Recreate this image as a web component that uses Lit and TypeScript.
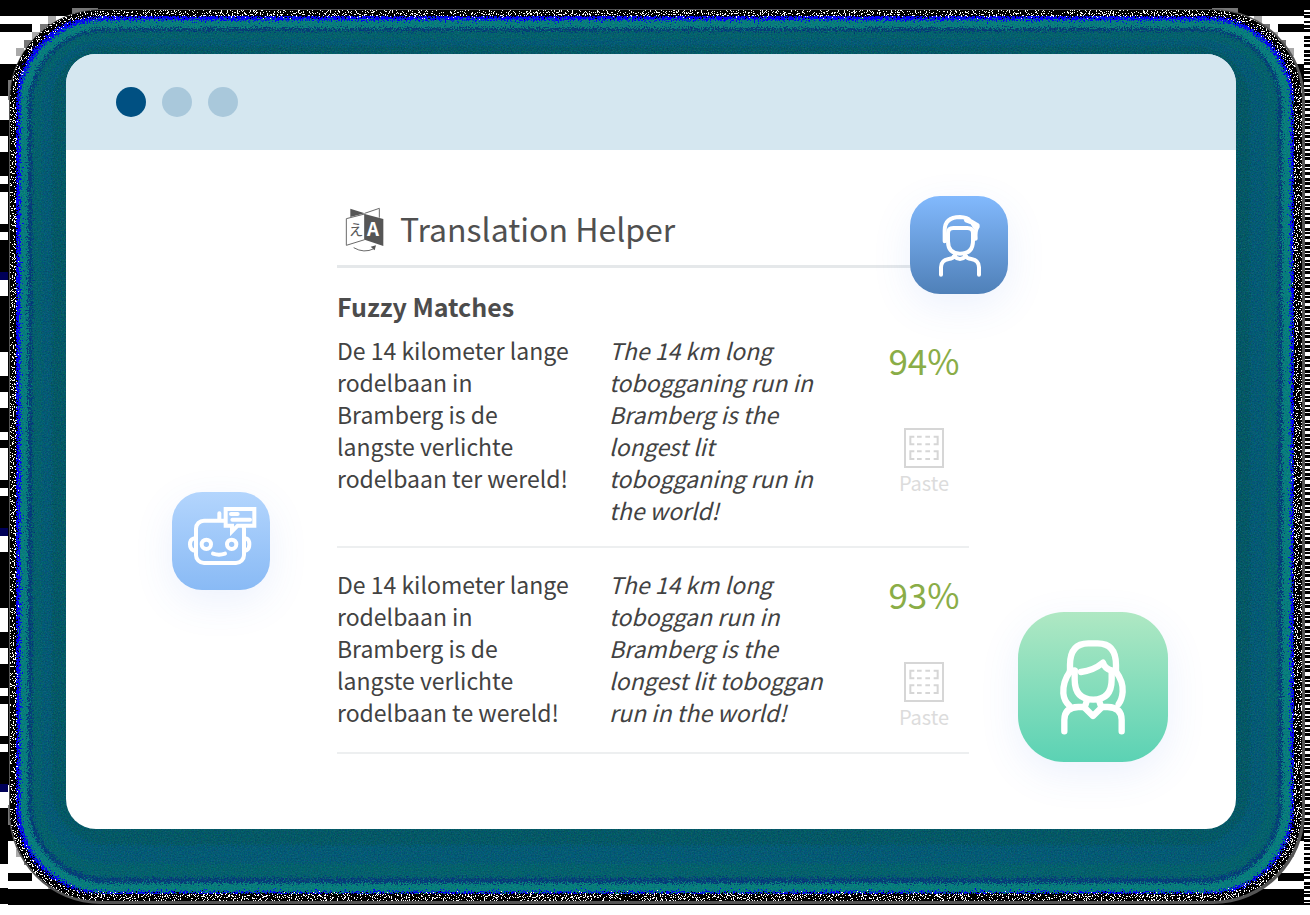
import { LitElement, html, css, svg } from "lit";
import { customElement, property } from "lit/decorators.js";

interface Match {
  source: string;
  target: string;
  score: number;
}

const MATCHES: Match[] = [
  {
    source: "De 14 kilometer lange rodelbaan in Bramberg is de langste verlichte rodelbaan ter wereld!",
    target: "The 14 km long tobogganing run in Bramberg is the longest lit tobogganing run in the world!",
    score: 94,
  },
  {
    source: "De 14 kilometer lange rodelbaan in Bramberg is de langste verlichte rodelbaan te wereld!",
    target: "The 14 km long toboggan run in Bramberg is the longest lit toboggan run in the world!",
    score: 93,
  },
];

// [start, end] of the dark bars in one 256px period of the left edge
const BARS = [[0, 16], [32, 56], [64, 72], [104, 112], [120, 152], [176, 232]];

// Steps of the blocky corner, as [inset along the edge, distance from the edge]
const STEPS = [[8, 80], [16, 48], [24, 40], [32, 32], [40, 24], [48, 16], [72, 8]];

@customElement("noise-frame")
class NoiseFrame extends LitElement {
  static styles = css`
    :host { display: block; position: absolute; inset: 0; overflow: hidden; background: #000; }
    svg { display: block; width: 100%; height: 100%; }
    .edge { x: 9px; y: 9px; width: calc(100% - 14px); height: calc(100% - 10px); rx: 92px; fill: #555; }
    .static { x: 10px; y: 10px; width: calc(100% - 18px); height: calc(100% - 14px); rx: 90px; fill: #000; }
    .blue { x: 16px; y: 16px; width: calc(100% - 32px); height: calc(100% - 27px); rx: 86px; fill: #0404f4; }
    .teal { x: 20px; y: 20px; width: calc(100% - 39px); height: calc(100% - 33px); rx: 84px; fill: #087c7c; }
    .navy { x: 28px; y: 28px; width: calc(100% - 56px); height: calc(100% - 50px); rx: 78px; fill: #053f78; }
    .green { x: 32px; y: 31px; width: calc(100% - 64px); height: calc(100% - 58px); rx: 74px; fill: #04606c; }
    .sea { x: 42px; y: 39px; width: calc(100% - 86px); height: calc(100% - 80px); rx: 66px; fill: #045a74; }
    .deep { x: 52px; y: 46px; width: calc(100% - 112px); height: calc(100% - 106px); rx: 56px; fill: #045866; }
  `;

  private corner(right: boolean, bottom: boolean) {
    return svg`<svg x=${right ? "100%" : "0"} y=${bottom ? "100%" : "0"} overflow="visible">
      <g transform="scale(${right ? -1 : 1} ${bottom ? -1 : 1})">
        <path fill="#fff" d="M0 16H72V24H48V32H40V40H32V64H0Z M0 88H16V120H0Z"/>
        <path fill="#000" d="M0 24H32V32H0Z"/>
        ${STEPS.map(([x, y]) => svg`<rect x=${x} y=${y} width=${x === 72 ? 26 : 8} height=${x === 8 ? 20 : 8} fill=${x % 16 ? "#777" : "#aaa"} />`)}
      </g>
    </svg>`;
  }

  render() {
    return html`<svg aria-hidden="true">
      <defs>
        <filter id="static" x="0" y="0" width="100%" height="100%" color-interpolation-filters="sRGB">
          <feTurbulence type="fractalNoise" baseFrequency="0.83" numOctaves="3" seed="4" />
          <feColorMatrix values="1 0 0 0 0  1 0 0 0 0  1 0 0 0 0  0 0 0 0 1" />
          <feComponentTransfer>
            <feFuncR type="discrete" tableValues="0 0 0 0 0 0 0 0 0 0 0 0 1 1 1 1 1 1 1 1" />
            <feFuncG type="discrete" tableValues="0 0 0 0 0 0 0 0 0 0 0 0 1 1 1 1 1 1 1 1" />
            <feFuncB type="discrete" tableValues="0 0 0 0 0 0 0 0 0 0 0 0 1 1 1 1 1 1 1 1" />
          </feComponentTransfer>
          <feComposite in2="SourceGraphic" operator="in" />
        </filter>
        <filter id="scatter" x="0" y="0" width="100%" height="100%" color-interpolation-filters="sRGB">
          <feTurbulence type="fractalNoise" baseFrequency="0.77" numOctaves="3" seed="11" result="n" />
          <feDisplacementMap in="SourceGraphic" in2="n" scale="12" xChannelSelector="R" yChannelSelector="G" result="d" />
          <feTurbulence type="fractalNoise" baseFrequency="0.7" numOctaves="2" seed="2" />
          <feColorMatrix values="1 0 0 0 0  0 1 0 0 0  0 0 1 0 0  0 0 0 0 1" result="g" />
          <feComposite in="d" in2="g" operator="arithmetic" k1="0" k2="1" k3="0.2" k4="-0.1" />
          <feComposite in2="d" operator="in" />
        </filter>
        <pattern id="bars" y="120" width="8" height="256" patternUnits="userSpaceOnUse">
          <rect width="8" height="256" fill="#fff" />
          ${BARS.map(([a, b]) => svg`<rect y=${a} width="8" height=${b - a} fill="#000" />`)}
          <rect y="152" width="8" height="8" fill="#000058" />
        </pattern>
        <pattern id="lines" width="6" height="64" patternUnits="userSpaceOnUse">
          <rect width="6" height="64" fill="#000" />
          <path fill="#fff" d="M0 2h6v2H0z M0 6h6v1H0z M0 10h6v3H0z M0 15h6v2H0z M0 20h6v1H0z M0 24h6v4H0z M0 31h6v1H0z M0 34h6v2H0z M0 39h6v3H0z M0 45h6v1H0z M0 49h6v2H0z M0 53h6v1H0z M0 57h6v3H0z M0 62h6v1H0z" />
        </pattern>
      </defs>
      ${this.corner(false, false)} ${this.corner(true, false)} ${this.corner(false, true)} ${this.corner(true, true)}
      <rect y="88" width="8" height="100%" fill="url(#bars)" />
      <svg x="100%" y="8" overflow="visible"><rect x="-6" width="6" height="100%" fill="url(#lines)" /></svg>
      <rect class="edge" />
      <rect class="static" filter="url(#static)" />
      <g filter="url(#scatter)">
        <rect class="blue" />
        <rect class="teal" />
        <rect class="navy" />
        <rect class="green" />
        <rect class="sea" />
        <rect class="deep" />
      </g>
    </svg>`;
  }
}

@customElement("fuzzy-match")
class FuzzyMatch extends LitElement {
  @property({ attribute: false }) match!: Match;

  static styles = css`
    :host { display: grid; grid-template-columns: 236px 234px 90px; justify-content: space-between; padding-bottom: 20px; border-bottom: 2px solid #edeff0; }
    p { margin: 0; font-size: 23px; line-height: 32px; color: #424242; }
    .target { font-style: italic; }
    .side { display: flex; flex-direction: column; align-items: center; }
    .score { font-size: 35px; line-height: 52px; color: #8aad47; }
    .paste { margin-top: 42px; padding: 0; border: 0; background: none; font: inherit; font-size: 20px; line-height: 30px; color: #dcdcdc; display: flex; flex-direction: column; align-items: center; cursor: pointer; }
    .paste svg { width: 40px; height: 40px; }
  `;

  render() {
    const { source, target, score } = this.match;
    return html`
      <p lang="nl">${source}</p>
      <p class="target" lang="en">${target}</p>
      <div class="side">
        <span class="score">${score}%</span>
        <button class="paste" type="button">
          <svg viewBox="103 296 120 120" fill="none" stroke="#d6d6d6" stroke-width="6" aria-hidden="true">
            <rect x="106" y="299" width="114" height="114" />
            <path d="M134 322H122V345H134M192 322H204V345H192M142 322H156M167 322H181M142 345H156M167 345H181" />
            <path d="M134 366H122V389H134M192 366H204V389H192M142 366H156M167 366H181M142 389H156M167 389H181" />
          </svg>
          Paste
        </button>
      </div>`;
  }
}

@customElement("app-root")
class AppRoot extends LitElement {
  static styles = css`
    :host { display: block; font-family: "Noto Sans CJK SC", "Noto Sans", sans-serif; background: #fff; }
    .stage { position: relative; padding: 54px 74px 76px 66px; }
    .window { position: relative; border-radius: 30px; overflow: hidden; background: #fff; }
    .bar { display: flex; align-items: center; gap: 16px; height: 96px; padding-left: 50px; background: #d5e7f0; }
    .dot { width: 30px; height: 30px; border-radius: 50%; background: #a9c8db; }
    .dot.on { background: #005082; }
    .body { display: flex; justify-content: center; padding: 52px 0 75px 4px; }
    .panel { position: relative; width: 632px; }
    .head { display: flex; align-items: center; gap: 16px; height: 55px; padding: 0 0 8px 8px; border-bottom: 3px solid #e5e8ea; }
    .head svg { width: 39px; height: 46px; }
    h1 { margin: 0; padding-bottom: 4px; font-size: 32px; line-height: 46px; font-weight: 400; color: #505050; }
    h2 { margin: 18px 0 8px; font-size: 25px; line-height: 40px; font-weight: 700; color: #4c4c4c; }
    .matches { display: grid; gap: 20px; }
    .avatar { position: absolute; width: 98px; height: 98px; border-radius: 30px; box-shadow: 0 12px 40px rgba(70, 120, 240, 0.1); }
    .avatar svg { display: block; width: 100%; height: 100%; fill: none; stroke: #fff; stroke-width: 12px; stroke-linecap: round; stroke-linejoin: round; }
    .man { top: -6px; right: -39px; background: linear-gradient(#82b9fd, #4f80b8); }
    .robot { top: 290px; left: -165px; background: linear-gradient(#b3d5fd, #89baf5); }
    .woman { top: 410px; right: -199px; width: 150px; height: 150px; border-radius: 46px; background: linear-gradient(#afe8c3, #5bd2b4); }
    .woman svg { stroke-width: 19px; }
  `;

  render() {
    return html`
      <div class="stage">
        <noise-frame></noise-frame>
        <main class="window">
          <div class="bar"><span class="dot on"></span><span class="dot"></span><span class="dot"></span></div>
          <div class="body">
            <div class="panel">
              <header class="head">
                <svg viewBox="45 54 117 138" aria-hidden="true">
                  <g fill="none" stroke="#6a6a6a" stroke-width="3">
                    <path d="M49 89L104 75V152L49 169Z" />
                    <path d="M104 73L148 58V86" />
                    <path d="M71 176Q102 194 132 179" />
                  </g>
                  <g fill="#565656">
                    <path d="M61 59L104 73L61 84Z" />
                    <path d="M104 75L160 90V171L104 152Z" />
                    <path d="M122 173L138 169L134 184Z" />
                  </g>
                  <text x="56" y="138" font-size="44" fill="#5a5a5a">え</text>
                  <text x="111" y="142" font-size="56" font-weight="700" fill="#fff">A</text>
                </svg>
                <h1>Translation Helper</h1>
              </header>
              <h2>Fuzzy Matches</h2>
              <div class="matches">${MATCHES.map((m) => html`<fuzzy-match .match=${m}></fuzzy-match>`)}</div>

              <div class="avatar man">
                <svg viewBox="90 48 294 294" aria-hidden="true">
                  <path d="M204 160Q204 144 220 144H262Q279 144 279 160V182Q279 221 240 221Q204 221 204 184Z" />
                  <path d="M194 184V152Q194 111 240 111Q262 112 270 122L293 136V140Q285 150 287 176M258 121L276 128L286 144" />
                  <path d="M222 229Q240 245 258 229" />
                  <path d="M183 284V262Q183 241 206 237Q220 236 225 226M297 284V262Q297 241 274 237Q260 236 255 226" />
                </svg>
              </div>
              <div class="avatar robot">
                <svg viewBox="66 66 294 294" aria-hidden="true">
                  <rect x="138" y="152" width="144" height="127" rx="24" />
                  <path d="M208 130V150M130 206Q120 209 120 223Q120 237 130 241M290 206Q298 209 298 223Q298 237 290 241" />
                  <circle cx="169" cy="223" r="14" />
                  <circle cx="245" cy="223" r="14" />
                  <path d="M189 251Q207 257 225 251" />
                  <path d="M227 117H313V167H263L246 184V167H227Z" fill="#a9cefb" stroke-linejoin="miter" />
                  <path d="M243 132H263M247 149H300" />
                </svg>
              </div>
              <div class="avatar woman">
                <svg viewBox="54 36 450 450" aria-hidden="true">
                  <path d="M210 215V195Q210 130 265 130H293Q348 130 348 195V215" />
                  <path d="M210 215Q188 245 190 280Q192 303 208 317M348 215Q370 245 368 275Q366 298 356 312" />
                  <path d="M224 212V238Q224 299 280 299Q335 299 335 238V212" />
                  <path d="M243 216Q280 212 309 188Q314 206 335 212M210 212H224" />
                  <path d="M260 304L254 323L279 348L304 323L298 304" />
                  <path d="M193 394V360Q193 322 235 321H250M365 394V360Q365 322 323 321H308" />
                </svg>
              </div>
            </div>
          </div>
        </main>
      </div>`;
  }
}
